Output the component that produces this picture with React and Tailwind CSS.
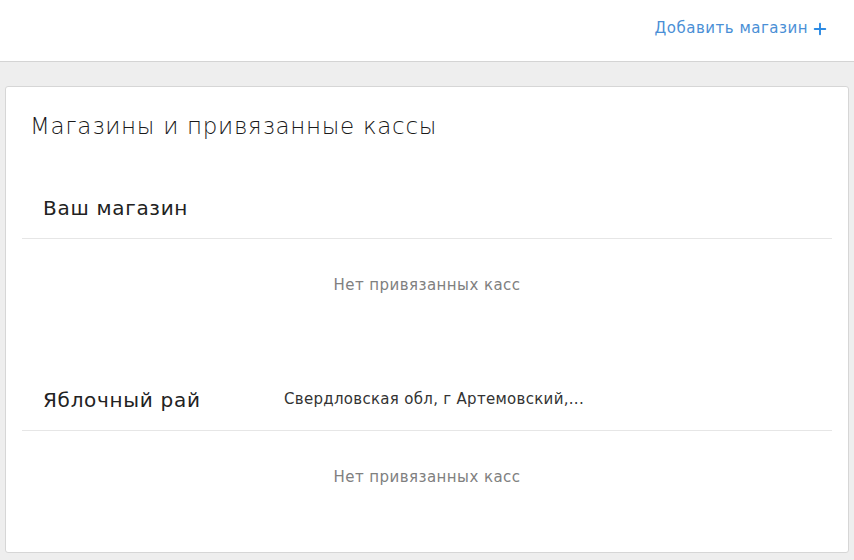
import { Plus } from "lucide-react";

const stores = [
  { name: "Ваш магазин", address: "" },
  { name: "Яблочный рай", address: "Свердловская обл, г Артемовский,..." },
];

function StoreBlock({ store }) {
  return (
    <div>
      <div className="flex h-[62px] items-center border-b border-[#e6e6e6] px-[21px]">
        <div className="w-[241px] text-[20px] tracking-[0.7px] text-[#222]">{store.name}</div>
        {store.address ? <div className="text-[15px] tracking-[0.3px] text-[#333]">{store.address}</div> : null}
      </div>
      <div className="flex h-[91px] items-center justify-center pt-[1px] text-[15px] tracking-[0.45px] text-[#808080]">
        Нет привязанных касс
      </div>
    </div>
  );
}

export default function App() {
  return (
    <div className="h-[560px] w-[854px] overflow-hidden bg-[#eeeeee] font-['DejaVu_Sans',sans-serif]">
      <header className="flex h-[62px] items-center justify-end border-b border-[#d4d4d4] bg-white pr-[25px] pb-[4px]">
        <button type="button" className="flex items-center gap-[3px] text-[15px] tracking-[0.5px] text-[#4a8fd6]">
          Добавить магазин
          <Plus className="size-[18px] text-[#2d8be4]" strokeWidth={2.6} />
        </button>
      </header>
      <div className="px-[5px] pt-[24px]">
        <section className="h-[467px] rounded-[3px] border border-[#d6d6d6] bg-white px-[16px] pt-[22px]">
          <h1 className="pl-[8px] text-[23px] font-light leading-[34px] tracking-[0.7px] text-[#1a1a1a]">Магазины и привязанные кассы</h1>
          <div className="mt-[34px]">
            {stores.map((store, i) => (
              <div key={store.name} className={i > 0 ? "mt-[39px]" : ""}>
                <StoreBlock store={store} />
              </div>
            ))}
          </div>
        </section>
      </div>
    </div>
  );
}
